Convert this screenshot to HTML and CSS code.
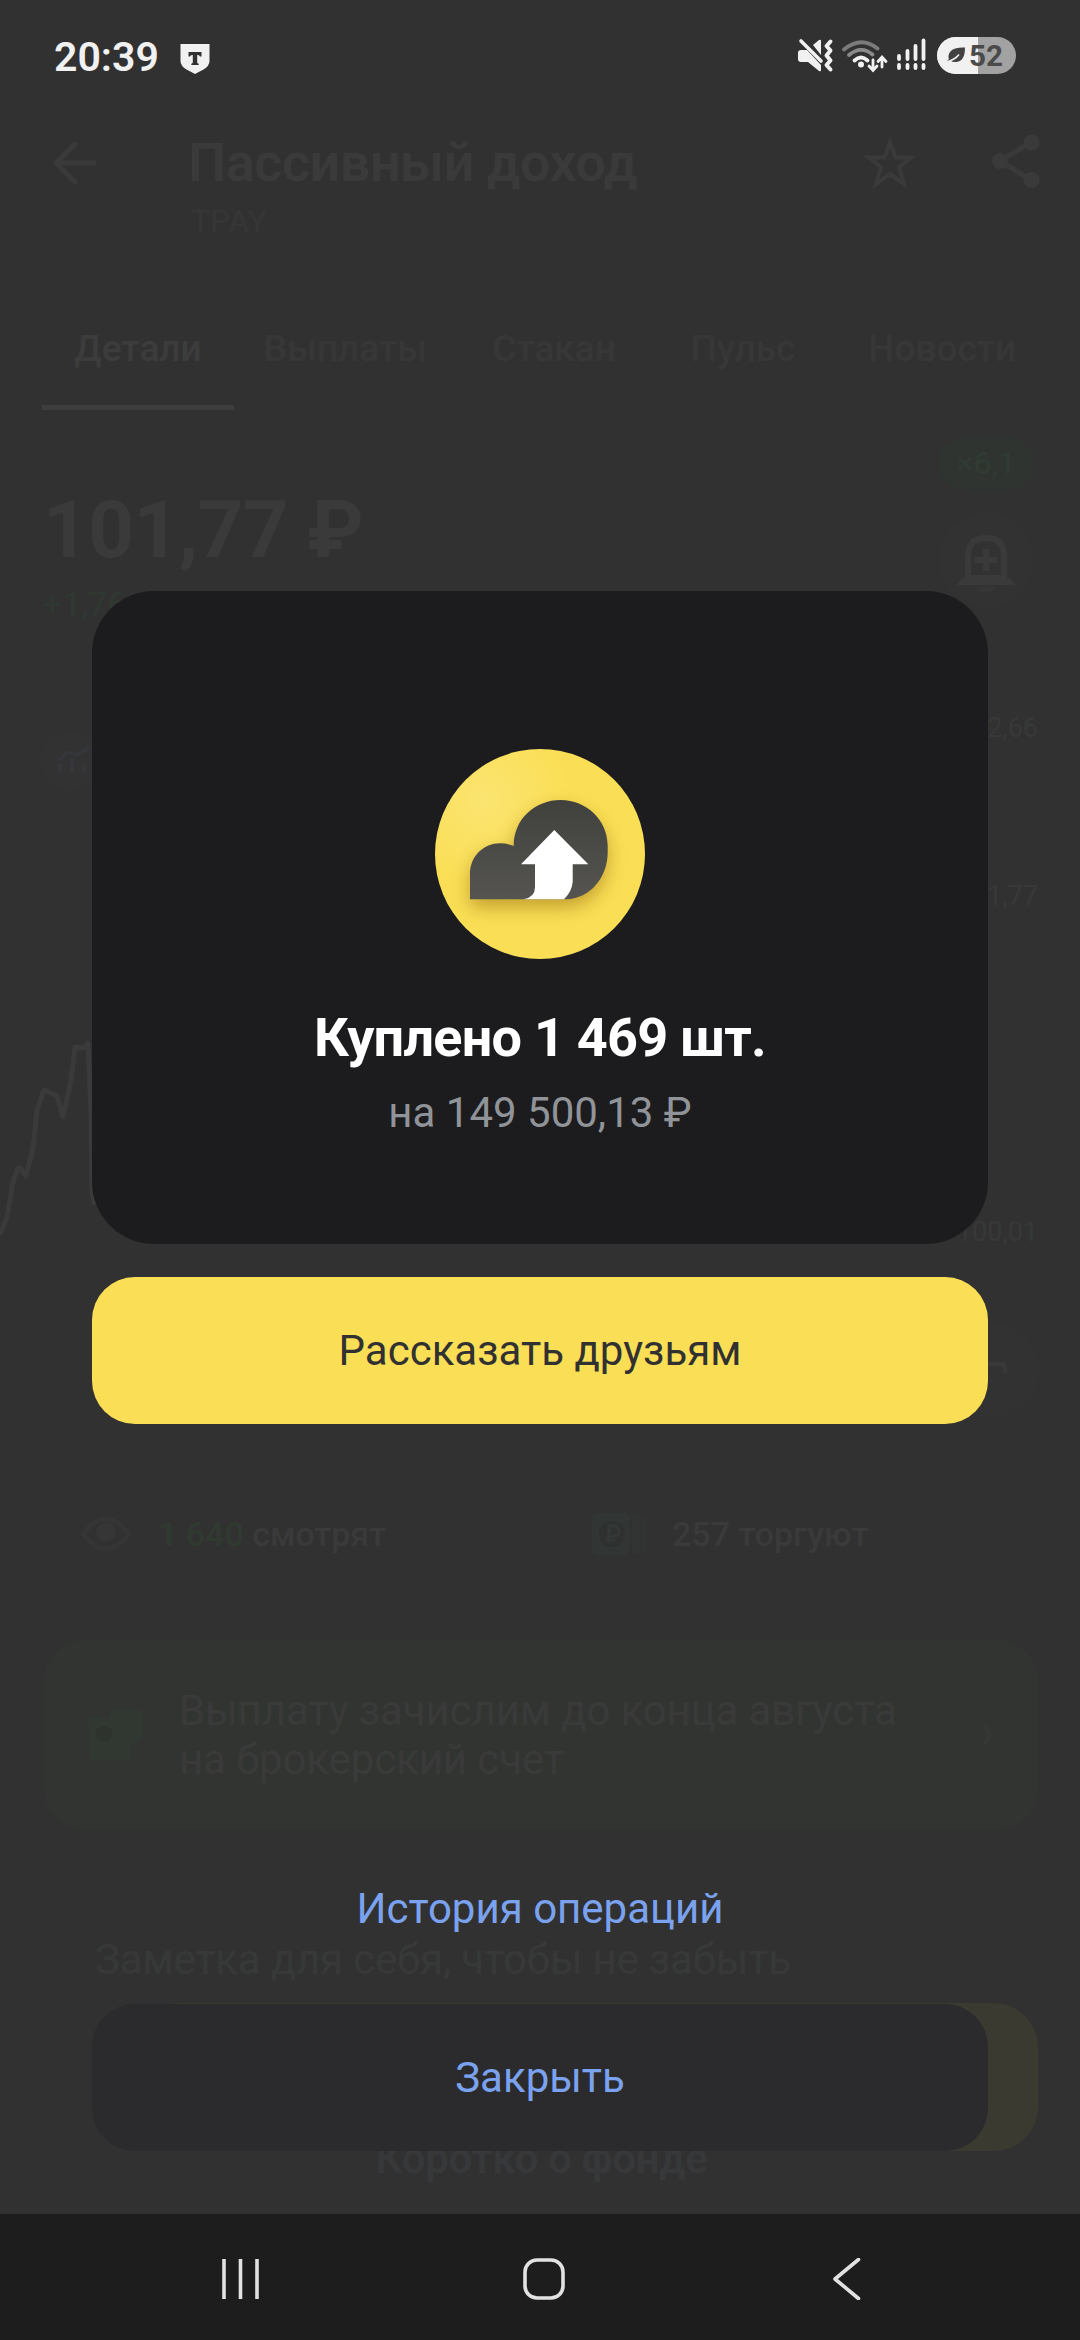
FILE: index.html
```html
<!DOCTYPE html>
<html lang="ru">
<head>
<meta charset="utf-8">
<title>Пассивный доход</title>
<link rel="stylesheet" href="styles.css">
</head>
<body>
<div class="screen">
  <main class="page">
    <div class="statusbar">
      <span class="clock">20:39</span>
      <svg class="shield" width="30" height="30" viewBox="0 0 30 30"><path d="M.5 0h29v17q0 5-6 8.500L15 30l-8.500-4.500Q.5 22 .5 17z" fill="#f1f1f1"/><path d="M8.500 8h13v4.500h-1.500q-.5-1.500-2-1.500h-.8v7.500q0 1 1.500 1.200V21h-7.400v-1.300q1.500-.2 1.500-1.200V11H12q-1.500 0-2 1.500H8.500z" fill="#313131"/></svg>
      <svg class="sysicons" width="222" height="40" viewBox="797 36 222 40">
        <g fill="#f1f1f1">
          <path d="M798 53q0-3 3-3h6l14 15v5q0 2-2 1l-11-9h-7q-3 0-3-3z"/>
          <path d="M813 45l6-5q2-1 2 1v14z"/>
          <path d="M801 41l20 20" stroke="#f1f1f1" stroke-width="3.600" stroke-linecap="round"/>
          <path d="M830.500 41.500l-4 4.500 4 4.500-4 5 4 5-4 4.500 4 4.500" fill="none" stroke="#f1f1f1" stroke-width="4" stroke-linecap="round" stroke-linejoin="round"/>
          <circle cx="861" cy="64.500" r="3"/>
        </g>
        <g fill="none" stroke-width="3.800" stroke-linecap="round">
          <path d="M844 49.500q17-14 33.500-1" stroke="#7b7b7b"/>
          <path d="M849 55q12-10 23.500-.5" stroke="#8a8a8a"/>
          <path d="M854.500 60.500q6.500-6 13 0" stroke="#f1f1f1"/>
          <path d="M873 60v10m-4-4l4 4.500 4-4.500M882 67V57.500m-4 4l4-4.500 4 4.500" stroke="#f1f1f1" stroke-width="2.800"/>
          <path d="M899 56v3M907.500 51v8M915.500 46v13M923.500 40.500V59M899 65v3M907.500 65v3M915.500 65v3M923.500 65v3" stroke="#f1f1f1"/>
        </g>
        <rect x="937" y="37" width="79" height="37" rx="18.500" fill="#a2a2a2"/>
        <path d="M978 37h-22.500a18.500 18.500 0 0 0 0 37H978z" fill="#f1f1f1"/>
        <path d="M965 47.500q0 15-10 14.500-3 0-4.500-1.500l-4.500 1.500 3-3q-2-5 3-9 4-3 13-2.500z" fill="#424242"/>
        <path d="M946 62q9-2 13-7.500" stroke="#f1f1f1" stroke-width="1.500" fill="none"/>
        <text class="battery" x="969" y="65.500" textLength="34" lengthAdjust="spacingAndGlyphs">52</text>
      </svg>
    </div>

    <header class="appbar">
      <svg class="back" width="42" height="42" viewBox="0 0 42 42"><path d="M21 2L2 21l19 19M3 21h38" /></svg>
      <div class="heading">
        <h1>Пассивный доход</h1>
        <p>TPAY</p>
      </div>
      <svg class="star" width="52" height="52" viewBox="0 0 52 52"><path d="M26 5l5.500 15.500H47L35 30l5 17-14-10-14 10 5-17L5 20.500h15.500z"/></svg>
      <svg class="share" width="48" height="54" viewBox="0 0 48 54"><path d="M39 8L8 27l31 19" fill="none" stroke="#3a3a3a" stroke-width="5"/><g fill="#3a3a3a"><circle cx="39.500" cy="8.500" r="8"/><circle cx="8" cy="27" r="8"/><circle cx="39.500" cy="46" r="8"/></g></svg>
    </header>

    <nav class="tabs">
      <span class="tab active">Детали</span><span class="tab">Выплаты</span><span class="tab">Стакан</span><span class="tab">Пульс</span><span class="tab">Новости</span>
    </nav>

    <section class="quote">
      <div class="quote-left">
        <div class="price">101,77 ₽</div>
        <div class="change">+1,76</div>
      </div>
      <div class="quote-right">
        <span class="boost">×6,1</span>
        <svg class="bell" width="96" height="96" viewBox="0 0 96 96"><circle cx="48" cy="48" r="48" fill="#323232"/><path d="M30 66V44q0-18 18-18t18 18v22z" fill="none" stroke="#3a3a3a" stroke-width="6"/><path d="M23 68q5-3 6-10h38q1 7 6 10v4H18z" fill="none"/><path d="M24 66h48l5 7H19zM45 37h6v8h8v6h-8v8h-6v-8h-8v-6h8z" fill="#3a3a3a"/><path d="M39 75h18q-2 6-9 6t-9-6z" fill="#363636"/></svg>
      </div>
    </section>

    <section class="chart">
      <div class="plot">
        <svg class="kind" width="60" height="60" viewBox="0 0 60 60"><circle cx="30" cy="30" r="30" fill="#323232"/><path d="M20 42V32M32 42V27M44 42V34M18 30l10-9 9 3 12-8" fill="none" stroke="#34363a" stroke-width="4"/></svg>
        <svg class="line" width="100" height="210" viewBox="0 1030 100 210"><path d="M0 1235l7-18 5-30q2-9 6-19l3 1 5 7 7-28 4-38 7-20 13 6 6 21 8-37 4-33 8 1 5-5 3 70 1 80 3 12"/></svg>
      </div>
      <div class="scale"><span>102,66</span><span>101,77</span><span>100,01</span></div>
    </section>

    <section class="ranges">
      <span class="round"><svg width="36" height="36" viewBox="0 0 36 36"><path d="M4 11h22q5 0 5 5v4" fill="none" stroke="#393939" stroke-width="4"/></svg></span>
    </section>

    <section class="activity">
      <div class="stat">
        <svg width="52" height="36" viewBox="0 0 52 36"><path d="M3 18Q26-12 49 18 26 48 3 18z" fill="none" stroke="#353535" stroke-width="5"/><circle cx="26" cy="16" r="10" fill="#363636"/></svg>
        <span><b class="green">1 640</b> смотрят</span>
      </div>
      <div class="stat">
        <svg width="56" height="42" viewBox="0 0 56 42"><rect width="38" height="42" rx="5" fill="#313534"/><path d="M40 1h8v40h-8zM49 4h5v34h-5z" fill="#313433"/><circle cx="20" cy="21" r="13" fill="#2e3130"/><path d="M17 30V13h5q5 0 5 5t-5 5h-8m0 4h9" fill="none" stroke="#333836" stroke-width="3"/></svg>
        <span>257 торгуют</span>
      </div>
    </section>

    <section class="payout">
      <svg width="56" height="54" viewBox="0 0 56 54"><path d="M0 10h22V2h32v28l-12 8v14H2z" fill="#303831"/><circle cx="16" cy="26" r="8" fill="#2e332e"/></svg>
      <p>Выплату зачислим до конца августа<br>на брокерский счет</p>
      <svg class="chevron" width="12" height="24" viewBox="0 0 12 24"><path d="M2 2l8 10-8 10"/></svg>
    </section>

    <p class="note">Заметка для себя, чтобы не забыть</p>
    <div class="buy"></div>
    <h2 class="about">Коротко о фонде</h2>
  </main>

  <div class="overlay">
    <section class="card">
      <svg width="210" height="210" viewBox="435 749 210 210">
        <defs>
          <radialGradient id="sun" gradientUnits="userSpaceOnUse" cx="484" cy="800" r="85"><stop offset="0" stop-color="#fbe471"/><stop offset="1" stop-color="#fadf56"/></radialGradient>
          <linearGradient id="cloud" x1="0" y1="0" x2="0" y2="1"><stop offset="0" stop-color="#40413d"/><stop offset="1" stop-color="#555450"/></linearGradient>
          <filter id="soft" x="-30%" y="-30%" width="160%" height="170%"><feGaussianBlur stdDeviation="9"/></filter>
          <path id="shape" d="M470 899.300V874C470 856 484 843.300 500 843.300q7 0 13.700 2.700C513.700 819 535 800 560.700 800s47 20 47 46v6c0 26-18 46.500-41 47.300z"/>
          <clipPath id="disc"><circle cx="540" cy="854" r="105"/></clipPath>
        </defs>
        <circle cx="540" cy="854" r="105" fill="url(#sun)"/>
        <g clip-path="url(#disc)"><use href="#shape" y="8" fill="#a9801f" opacity=".66" filter="url(#soft)"/></g>
        <use href="#shape" fill="url(#cloud)"/>
        <path d="M554.300 830l34 34.300h-15.600V882q-1 10-8.700 17.300h-40.500q11.500-2 11.500-12v-23h-14z" fill="#fff"/>
      </svg>
      <h3>Куплено 1 469 шт.</h3>
      <p>на 149 500,13 ₽</p>
    </section>
    <button class="btn primary">Рассказать друзьям</button>
    <a class="history">История операций</a>
    <button class="btn close">Закрыть</button>
    <footer class="navbar">
      <svg width="38" height="40" viewBox="0 0 38 40"><path d="M2 0v40M18.500 0v40M35 0v40"/></svg>
      <svg class="home" width="42" height="42" viewBox="0 0 42 42"><rect x="2" y="2" width="38" height="38" rx="12"/></svg>
      <svg width="28" height="42" viewBox="0 0 28 42"><path d="M25.500 1.500L2 21l23.500 19.500"/></svg>
    </footer>
  </div>
</div>
</body>
</html>
```
FILE: styles.css
```css
* { box-sizing: border-box; margin: 0; padding: 0; }
body { font-family: Roboto, "Noto Sans", sans-serif; background: #313131; }
svg { display: block; flex: none; }
.screen { position: relative; width: 1080px; height: 2340px; overflow: hidden; background: #313131; }
.page { display: flex; flex-direction: column; height: 2214px; overflow: hidden; color: #3a3a3a; }

.statusbar { display: flex; align-items: flex-start; height: 112px; padding: 35px 61px 0 54px; }
.clock { width: 126px; margin-top: -1px; font-size: 41px; line-height: 46px; font-weight: 600; color: #f1f1f1; }
.shield { margin-top: 9px; }
.sysicons { margin: 1px 0 0 auto; }
.battery { font-size: 30px; font-weight: 700; fill: #4a4a4a; }

.appbar { display: flex; height: 194px; padding: 22px 40px 0 54px; }
.back { margin-top: 8px; fill: none; stroke: #3a3a3a; stroke-width: 5; stroke-linecap: round; stroke-linejoin: round; }
.heading { flex: 1; margin-left: 92px; }
.heading h1 { font-size: 54px; line-height: 64px; font-weight: 600; letter-spacing: -.5px; margin-top: -3px; }
.heading p { font-size: 32px; line-height: 38px; margin: 7px 0 0 3px; color: #363636; }
.star { margin-top: 3px; fill: none; stroke: #3a3a3a; stroke-width: 4; }
.share { margin: 0 0 0 76px; }

.tabs { display: flex; height: 104px; padding: 0 31px 0 42px; border-bottom: 1px solid #333; }
.tab { display: flex; justify-content: center; height: 104px; padding-top: 22px; font-size: 37px; line-height: 42px; font-weight: 500; color: #373737; width: 224px; }
.tab.active { width: 192px; color: #3c3c3c; border-bottom: 5px solid #3d3d3d; }
.tab:nth-child(3) { width: 194px; }
.tab:nth-child(4) { width: 185px; }
.tab:nth-child(5) { width: 214px; }

.quote { display: flex; justify-content: space-between; height: 250px; padding: 27px 46px 0 43px; }
.price { margin-top: 46px; font-size: 80px; line-height: 94px; font-weight: 700; letter-spacing: -.7px; white-space: nowrap; }
.change { margin-top: 7px; font-size: 34px; line-height: 40px; color: #303931; }
.quote-right { display: flex; flex-direction: column; align-items: flex-end; gap: 22px; }
.boost { width: 96px; height: 53px; border-radius: 26px; background: #303430; color: #303b33; font-size: 32px; line-height: 52px; text-align: center; }

.chart { display: flex; justify-content: space-between; height: 600px; padding-right: 42px; }
.kind { margin: 71px 0 0 40px; }
.line { margin-top: 239px; }
.line path { fill: none; stroke: #3a3a3a; stroke-width: 5; stroke-linejoin: round; }
.scale { display: flex; flex-direction: column; align-items: flex-end; font-size: 27px; line-height: 32px; color: #373938; padding-top: 52px; }
.scale span:nth-child(2) { margin-top: 136px; }
.scale span:nth-child(3) { margin-top: 304px; }

.ranges { display: flex; justify-content: flex-end; height: 232px; padding: 63px 40px 0; }
.round { display: flex; align-items: center; justify-content: center; width: 96px; height: 96px; border-radius: 48px; background: #323232; }

.activity { display: flex; height: 148px; padding: 21px 80px 0; font-size: 34px; line-height: 42px; font-weight: 500; color: #3a3a3a; }
.stat { display: flex; align-items: center; align-self: flex-start; width: 512px; gap: 26px; height: 42px; white-space: nowrap; }
.stat:last-child { gap: 24px; width: 300px; }
.green { font-weight: 500; color: #303a31; }

.payout { display: flex; align-items: center; height: 190px; margin: 0 42px 0 44px; padding: 0 45px 0 44px; border-radius: 40px; background: #313431; font-size: 42px; line-height: 49px; letter-spacing: -.1px; color: #3a3a3a; }
.payout p { flex: 1; margin-left: 35px; white-space: nowrap; }
.chevron path { fill: none; stroke: #343734; stroke-width: 4; }
.note { margin: 105px 95px 0; font-size: 42px; line-height: 49px; letter-spacing: -.18px; color: #373938; }
.buy { flex: none; width: 900px; height: 148px; margin: 19px 0 0 138px; border-radius: 44px; background: #3b3a30; }
.about { font-size: 42px; line-height: 49px; font-weight: 600; letter-spacing: -.3px; text-align: center; margin: -17px 0 0 3px; color: #37383a; }

.overlay { position: absolute; inset: 0; display: flex; flex-direction: column; padding-top: 591px; }
.card { flex: none; display: flex; flex-direction: column; align-items: center; height: 653px; margin: 0 92px; padding-top: 158px; border-radius: 62px; background: #1c1c1e; }
.card h3 { margin-top: 47px; font-size: 54px; line-height: 64px; font-weight: 700; letter-spacing: -.75px; color: #fff; }
.card p { margin-top: 18px; font-size: 42px; line-height: 50px; color: #909499; }
.btn { flex: none; display: block; margin: 0 92px; border: 0; border-radius: 43px; font: 400 42px/50px Roboto, "Noto Sans", sans-serif; }
.primary { height: 147px; margin-top: 33px; background: #fadf56; color: #313131; }
.history { display: block; margin-top: 460px; height: 50px; font-size: 42px; line-height: 50px; text-align: center; color: #7ba2ee; }
.close { height: 147px; margin-top: 70px; background: #2b2b2d; color: #7ba2ee; }
.navbar { display: flex; align-items: center; justify-content: space-between; height: 126px; margin-top: auto; padding: 4px 219px 0 222px; background: #1d1d1d; }
.navbar svg { fill: none; stroke: #e2e2e2; stroke-width: 3.600; stroke-linecap: round; stroke-linejoin: round; }
.navbar .home { margin-right: 5px; }
```
